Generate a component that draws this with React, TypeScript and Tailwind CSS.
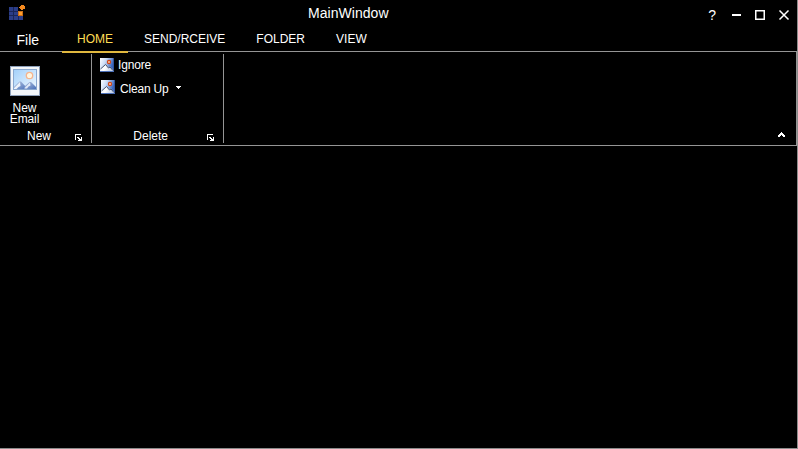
import React from "react";

function AppLogo() {
  return (
    <svg width="18" height="17" viewBox="0 0 18 17" shapeRendering="crispEdges">
      <rect x="0" y="2" width="14" height="13" fill="#1a2557" />
      <g fill="#2b3d87">
        <rect x="0" y="2" width="4" height="4" />
        <rect x="5" y="2" width="4" height="4" />
        <rect x="0" y="7" width="4" height="3" />
        <rect x="5" y="7" width="4" height="3" />
        <rect x="0" y="11" width="4" height="4" />
        <rect x="5" y="11" width="4" height="4" />
        <rect x="10" y="11" width="4" height="4" />
      </g>
      <rect x="9" y="2" width="5" height="4" fill="#000" />
      <rect x="9" y="6" width="5" height="5" fill="#c96f18" />
      <rect x="10" y="7" width="3" height="3" fill="#ff9d2e" />
      <path d="M11 1h1V0h3v1h1v3h-2v1h-2V4h-1V3h-1V2h1z" fill="#f58a1f" />
    </svg>
  );
}

function LargePicture() {
  return (
    <svg width="30" height="30" viewBox="0 0 30 30">
      <defs>
        <linearGradient id="largeSky" x1="0" y1="0" x2="1" y2="1">
          <stop offset="0" stopColor="#a3d0fa" />
          <stop offset="1" stopColor="#eef8ff" />
        </linearGradient>
        <linearGradient id="largeHill" x1="0" y1="0" x2="1" y2="1">
          <stop offset="0" stopColor="#b4c3de" />
          <stop offset="1" stopColor="#4a72bb" />
        </linearGradient>
      </defs>
      <rect x="0.5" y="0.5" width="29" height="29" fill="#f3f6fa" stroke="#8ea0ba" />
      <rect x="3.5" y="3.5" width="23" height="20" fill="url(#largeSky)" stroke="#8aa8cf" />
      <circle cx="19.5" cy="9.5" r="3.2" fill="#fff6e0" stroke="#f4b48e" strokeWidth="1.3" />
      <path d="M4 23v-2l5.5-5.5h1.5l7 7.5z" fill="url(#largeHill)" />
      <path d="M14 23l1-3 4.500-4h1.500l5 5v2z" fill="url(#largeHill)" />
      <path d="M4 22l6-6 .5 4-2 1-2 2H4z" fill="#edf3fb" />
      <path d="M14.500 22l5.500-5.500.5 3-2 1-1.500 2h-2z" fill="#e1eaf7" />
    </svg>
  );
}

function SmallPicture() {
  return (
    <svg className="shrink-0" width="14" height="14" viewBox="0 0 14 14">
      <defs>
        <linearGradient id="smallSky" x1="0" y1="0" x2="1" y2="0.4">
          <stop offset="0" stopColor="#ffffff" />
          <stop offset="0.45" stopColor="#c8daf6" />
          <stop offset="1" stopColor="#3a66bd" />
        </linearGradient>
        <linearGradient id="smallHill" x1="0" y1="0" x2="1" y2="0.3">
          <stop offset="0" stopColor="#dfe8f8" />
          <stop offset="0.5" stopColor="#ffffff" />
          <stop offset="1" stopColor="#c3d1ea" />
        </linearGradient>
      </defs>
      <rect width="14" height="14" fill="#31549c" />
      <path d="M0 0h13v13H0z" fill="url(#smallSky)" />
      <path d="M0 13v-2l5-4.500h1l3 3 1-1 3 3V13z" fill="url(#smallHill)" />
      <path d="M0.500 11l5-4.500 3 3.500 1.500-1 3 3.500" fill="none" stroke="#3f4d6b" strokeWidth="1" />
      <path d="M0 13.500h14" stroke="#4c70b8" />
      <circle cx="9" cy="4" r="1.600" fill="#fbc4a2" stroke="#d2481a" strokeWidth="1.200" />
    </svg>
  );
}

function Launcher() {
  return (
    <svg width="7" height="7" viewBox="0 0 7 7" shapeRendering="crispEdges" fill="#fff">
      <path d="M0 0h6v1H1v5H0z" />
      <path d="M2 3h2v1h1v1h1V3h1v4H3V6h1V5H3V4H2z" />
    </svg>
  );
}

function TitleBar() {
  return (
    <header className="flex h-[28px] justify-between">
      <div className="w-[308px] pl-[9px] pt-[5px]">
        <AppLogo />
      </div>
      <h1 className="pt-[3px] text-[14px] leading-[20px] tracking-[0.04px]">MainWindow</h1>
      <div className="flex flex-1 justify-end pr-[7px] pt-[9px]">
        <span className="mr-[16px] mt-[-1px] text-[14px] leading-[14px]">?</span>
        <svg width="58" height="12" viewBox="0 0 58 12" fill="none" stroke="#fff">
          <path d="M0 6h9" strokeWidth="2" />
          <path d="M23.750 1.750h8.500v8.500h-8.500z" strokeWidth="1.500" />
          <path d="M47.500 1.500l9 9M56.500 1.500l-9 9" strokeWidth="1.500" />
        </svg>
      </div>
    </header>
  );
}

function Tabs() {
  return (
    <nav className="flex h-[23px] text-[12px] leading-[22px]">
      <span className="w-[62px] pl-[16.5px] pt-px text-[14px] leading-[23px]">File</span>
      <span className="z-10 h-[25px] w-[66px] border-b-2 border-[#e0b83f] pl-[15px] text-[#ffdc55]">
        HOME
      </span>
      <span className="ml-[16px]">SEND/RCEIVE</span>
      <span className="ml-[31px]">FOLDER</span>
      <span className="ml-[31px]">VIEW</span>
    </nav>
  );
}

function GroupFooter({ label, className }: { label: string; className: string }) {
  return (
    <div className={`mt-auto flex h-[16px] items-start justify-end pr-[9px] ${className}`}>
      <span className="pt-[2px] leading-[14px]">{label}</span>
      <span className="pt-[7px] leading-none">
        <Launcher />
      </span>
    </div>
  );
}

function Ribbon() {
  return (
    <section className="flex h-[95px] border-y border-r border-[#959595] py-[2px] text-[12px]">
      <div className="flex w-[92px] flex-col border-r border-[#959595]">
        <button className="ml-[9px] mt-[12px] flex w-[31px] flex-col items-center">
          <LargePicture />
          <span className="mt-[7px] flex flex-col items-center leading-[11px]">
            <span>New</span>
            <span className="tracking-[-0.1px]">Email</span>
          </span>
        </button>
        <GroupFooter label="New" className="gap-[24px]" />
      </div>
      <div className="flex w-[132px] flex-col border-r border-[#959595]">
        <div className="ml-[8px] mt-[4px] flex h-[14px] items-center gap-[4px]">
          <SmallPicture />
          <span className="leading-[14px] tracking-[-0.15px]">Ignore</span>
        </div>
        <div className="ml-[9px] mt-[8px] flex h-[14px] gap-[5px]">
          <SmallPicture />
          <span className="pt-[2px] leading-[14px] tracking-[-0.2px]">Clean Up</span>
          <svg className="ml-[3px] mt-[6px]" width="5" height="3" fill="#fff" shapeRendering="crispEdges">
            <path d="M0 0h5v1H4v1H3v1H2V2H1V1H0z" />
          </svg>
        </div>
        <GroupFooter label="Delete" className="gap-[39px]" />
      </div>
      <div className="flex flex-1 items-end justify-end pb-[6px] pr-[11px]">
        <svg width="7" height="5" fill="#fff" shapeRendering="crispEdges">
          <path d="M3 0h1v1h1v1h1v1h1v2H5V4H4V3H3v1H2v1H0V3h1V2h1V1h1z" />
        </svg>
      </div>
    </section>
  );
}

export default function App() {
  return (
    <main className="flex h-[449px] w-[798px] flex-col border-b border-r border-[#8c8c8c] bg-black font-['Liberation_Sans',Arial,sans-serif] text-white">
      <TitleBar />
      <Tabs />
      <Ribbon />
    </main>
  );
}
